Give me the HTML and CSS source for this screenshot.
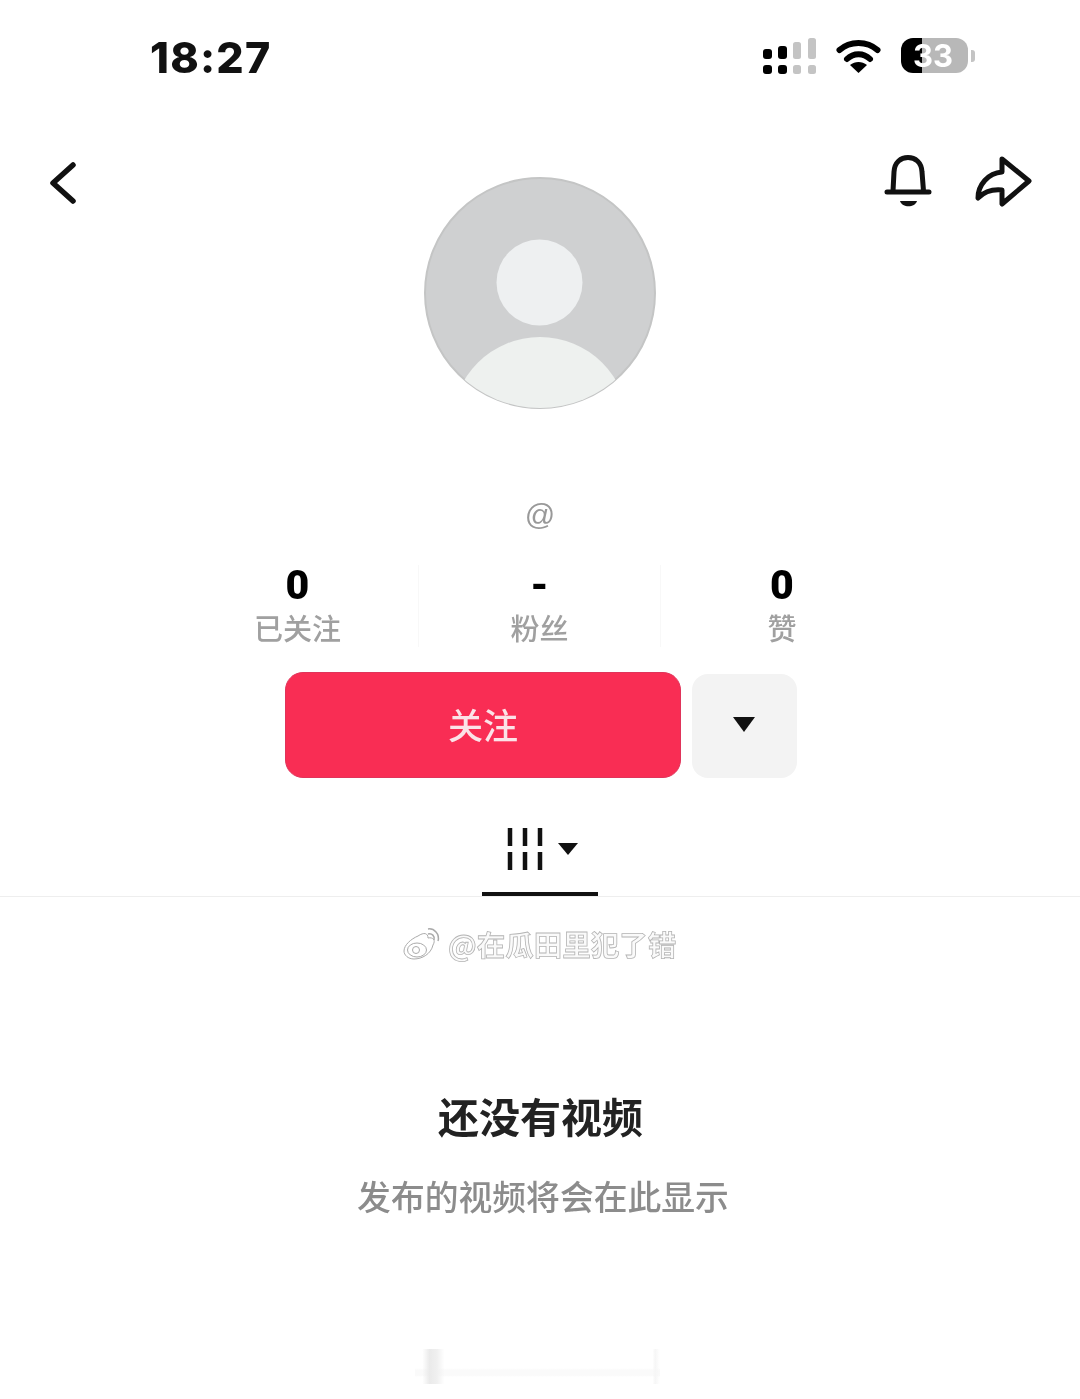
FILE: index.html
```html
<!DOCTYPE html>
<html lang="zh-CN">
<head>
    <meta charset="UTF-8">
    <meta name="viewport" content="width=device-width, initial-scale=1.0">
    <title>主页</title>
    <link rel="stylesheet" href="styles.css">
</head>
<body>
    <div class="page">
        <div class="status-bar">
            <span class="time">18:27</span>
            <div class="status-icons">
                <svg class="signal" width="54" height="36" viewBox="0 0 54 36">
                    <rect x="0" y="11" width="9" height="10" rx="3" fill="#000"/>
                    <rect x="15" y="8" width="9" height="13" rx="3" fill="#000"/>
                    <rect x="30" y="4" width="8" height="17" rx="2.5" fill="#c4c4c4"/>
                    <rect x="45" y="0" width="8" height="21" rx="2.5" fill="#c4c4c4"/>
                    <rect x="0" y="27" width="9" height="9" rx="3" fill="#000"/>
                    <rect x="15" y="27" width="9" height="9" rx="3" fill="#000"/>
                    <rect x="30" y="27" width="8" height="9" rx="2.5" fill="#c4c4c4"/>
                    <rect x="45" y="27" width="8" height="9" rx="2.5" fill="#c4c4c4"/>
                </svg>
                <svg class="wifi" width="45" height="34" viewBox="0 0 45 34">
                    <path d="M3.5 11 C14 1.5 31 1.5 41.5 11" fill="none" stroke="#000" stroke-width="6" stroke-linecap="round"/>
                    <path d="M11 20 C17.5 13.5 27.5 13.5 34 20" fill="none" stroke="#000" stroke-width="6" stroke-linecap="round"/>
                    <path d="M22.5 34 L14 26 C19 22 26 22 31 26 Z" fill="#000"/>
                </svg>
                <div class="battery">
                    <div class="battery-body">33</div>
                    <div class="battery-nub"></div>
                </div>
            </div>
        </div>

        <div class="profile-head">
            <svg class="back" width="28" height="42" viewBox="0 0 28 42">
                <path d="M24 3 L4 21 L24 39" fill="none" stroke="#111" stroke-width="5.5" stroke-linecap="round" stroke-linejoin="round"/>
            </svg>
            <svg class="avatar" width="232" height="232" viewBox="0 0 232 232">
                <defs>
                    <clipPath id="avatarClip"><circle cx="116" cy="116" r="115"/></clipPath>
                </defs>
                <circle cx="116" cy="116" r="115" fill="#cfd0d1" stroke="#c4c5c5" stroke-width="2"/>
                <circle cx="115.500" cy="105.500" r="43" fill="#eef0f1"/>
                <circle cx="116" cy="248" r="88" fill="#eef1ef" clip-path="url(#avatarClip)"/>
            </svg>
            <div class="head-actions">
                <svg width="48" height="54" viewBox="0 0 48 54">
                    <path d="M3 37 H45 M9 36 L10 17 C10.500 7 17 2.500 24 2.500 C31 2.500 37.500 7 38 17 L39.500 36" fill="none" stroke="#111" stroke-width="5" stroke-linecap="round" stroke-linejoin="round"/>
                    <path d="M16 46 H33 C31 53 18 53 16 46 Z" fill="#111"/>
                </svg>
                <svg width="58" height="53" viewBox="0 0 58 53">
                    <path d="M27 4 L54 26 L27 49 V35 C17 34 9 37 3 43 C3 30 13 18 27 17 Z" fill="none" stroke="#111" stroke-width="5" stroke-linejoin="round"/>
                </svg>
            </div>
        </div>

        <div class="handle">@</div>

        <div class="stats">
            <div class="stat">
                <div class="stat-num">0</div>
                <div class="stat-label">已关注</div>
            </div>
            <div class="stat">
                <div class="stat-num">-</div>
                <div class="stat-label">粉丝</div>
            </div>
            <div class="stat">
                <div class="stat-num">0</div>
                <div class="stat-label">赞</div>
            </div>
        </div>

        <div class="actions">
            <button class="follow-btn" type="button">关注</button>
            <button class="more-btn" type="button"><span class="caret"></span></button>
        </div>

        <div class="tabs">
            <div class="tab">
                <svg width="36" height="42" viewBox="0 0 36 42">
                    <path d="M3 0 V18 M18 0 V18 M33 0 V18 M3 24 V42 M18 24 V42 M33 24 V42" fill="none" stroke="#111" stroke-width="4.5"/>
                </svg>
                <span class="caret caret-small"></span>
            </div>
        </div>

        <div class="watermark">
            <svg width="38" height="35" viewBox="0 0 38 35">
                <path d="M15 9 C21 5 25 6 25 11 C30 10 33 13 30 18 C28 27 19 32 11 32 C5 32 1 28 1 24 C1 18 8 12 15 9 Z" fill="#fff" stroke="#aaa" stroke-width="1"/>
                <ellipse cx="14" cy="23" rx="9.500" ry="7" fill="none" stroke="#aaa" stroke-width="1"/>
                <circle cx="13" cy="23" r="3.500" fill="none" stroke="#aaa" stroke-width="1"/>
                <path d="M25 2 C31 1 37 7 35 14 M25 7 C29 6 32 9 31 13" fill="none" stroke="#aaa" stroke-width="1.500"/>
            </svg>
            <span class="watermark-text">@在瓜田里犯了错</span>
        </div>

        <div class="empty">
            <div class="empty-title">还没有视频</div>
            <div class="empty-sub">发布的视频将会在此显示</div>
        </div>

        <div class="home-smudge"></div>
    </div>
</body>
</html>
```

FILE: styles.css
```css
* {
    box-sizing: border-box;
}

body {
    margin: 0;
    background-color: #fff;
    font-family: "Noto Sans CJK SC", "Noto Sans", sans-serif;
    color: #111;
}

.page {
    width: 1080px;
    height: 1399px;
    overflow: hidden;
    filter: blur(0.6px);
}

.status-bar {
    height: 115px;
    display: flex;
    justify-content: space-between;
    align-items: flex-start;
    padding: 33px 105px 0 150px;
}

.time {
    font-family: Inter, sans-serif;
    font-size: 43px;
    font-weight: 800;
    letter-spacing: 1.2px;
    line-height: 48px;
    color: #111;
}

.status-icons {
    display: flex;
    align-items: flex-start;
    padding-top: 5px;
}

.signal {
    margin-right: 19px;
}

.wifi {
    margin-top: 1px;
    margin-right: 20px;
}

.battery {
    display: flex;
    align-items: center;
}

.battery-body {
    width: 67px;
    height: 35px;
    padding-right: 3px;
    border-radius: 12px;
    background: linear-gradient(to right, #000 31%, #b8b8b8 31%);
    color: #fff;
    font-family: Inter, sans-serif;
    font-size: 31px;
    font-weight: 700;
    line-height: 35px;
    text-align: center;
}

.battery-nub {
    width: 4px;
    height: 12px;
    margin-left: 3px;
    border-radius: 0 3px 3px 0;
    background-color: #c4c4c4;
}

.profile-head {
    display: grid;
    grid-template-columns: 1fr 232px 1fr;
    align-items: start;
    height: 294px;
    padding-top: 40px;
}

.back {
    margin: 7px 0 0 49px;
}

.avatar {
    margin-top: 22px;
}

.head-actions {
    display: flex;
    justify-content: flex-end;
    gap: 43px;
    padding-right: 47px;
}

.handle {
    margin-top: 86px;
    text-align: center;
    font-family: "Liberation Sans", sans-serif;
    font-size: 30px;
    line-height: 40px;
    color: #999;
}

.stats {
    width: 726px;
    margin: 30px auto 0;
    display: grid;
    grid-template-columns: repeat(3, 1fr);
}

.stat {
    text-align: center;
    border-right: 1px solid #f8f8f8;
}

.stat:last-child {
    border-right: none;
}

.stat-num {
    font-family: Roboto, sans-serif;
    font-size: 41px;
    font-weight: 900;
    line-height: 40px;
    color: #000;
}

.stat-label {
    margin-top: 2px;
    font-size: 29px;
    font-weight: 500;
    line-height: 40px;
    color: #a0a0a0;
}

.actions {
    display: flex;
    justify-content: center;
    gap: 11px;
    margin-top: 25px;
    padding-left: 2px;
}

.follow-btn {
    width: 396px;
    height: 106px;
    padding: 0 0 4px;
    border: 1px solid #e0345a;
    border-radius: 18px;
    background-color: #f92d54;
    color: #fbe3e8;
    font-family: inherit;
    font-size: 35px;
    font-weight: 500;
}

.more-btn {
    width: 105px;
    height: 104px;
    margin-top: 2px;
    border: none;
    border-radius: 16px;
    background-color: #f3f3f3;
    display: flex;
    align-items: center;
    justify-content: center;
    padding: 0 2px 4px 0;
}

.caret {
    display: block;
    width: 0;
    height: 0;
    border-left: 11px solid transparent;
    border-right: 11px solid transparent;
    border-top: 15px solid #111;
}

.caret-small {
    border-left-width: 10px;
    border-right-width: 10px;
    border-top-width: 12px;
    margin: 15px 0 0 15px;
}

.tabs {
    border-bottom: 1px solid #eee;
    padding-top: 50px;
    height: 119px;
}

.tab {
    width: 116px;
    height: 68px;
    margin: 0 auto;
    padding-left: 25px;
    display: flex;
    align-items: flex-start;
    border-bottom: 4px solid #111;
}

.watermark {
    display: flex;
    align-items: center;
    gap: 7px;
    height: 38px;
    margin-top: 28px;
    padding-left: 403px;
}

.watermark-text {
    font-size: 28.500px;
    font-weight: 700;
    line-height: 38px;
    color: #fafafa;
    -webkit-text-stroke: 0.8px #b4b4b4;
    white-space: nowrap;
}

.empty {
    margin-top: 124px;
    padding-left: 1px;
    text-align: center;
}

.empty-title {
    font-size: 41px;
    font-weight: 700;
    line-height: 56px;
    color: #222;
}

.empty-sub {
    margin-top: 31px;
    padding-left: 5px;
    font-size: 33.800px;
    font-weight: 500;
    line-height: 44px;
    color: #8c8c8c;
}

.home-smudge {
    width: 245px;
    height: 35px;
    margin: 131px 0 0 415px;
    background:
        linear-gradient(to right, transparent 3%, #eaeaea 6%, #f0f0f0 9%, transparent 12%, transparent 97%, #f6f6f6 98%, transparent 100%),
        linear-gradient(to bottom, #fff 55%, #fafafa 60%, #fafafa 75%, #fff 80%);
}
```
